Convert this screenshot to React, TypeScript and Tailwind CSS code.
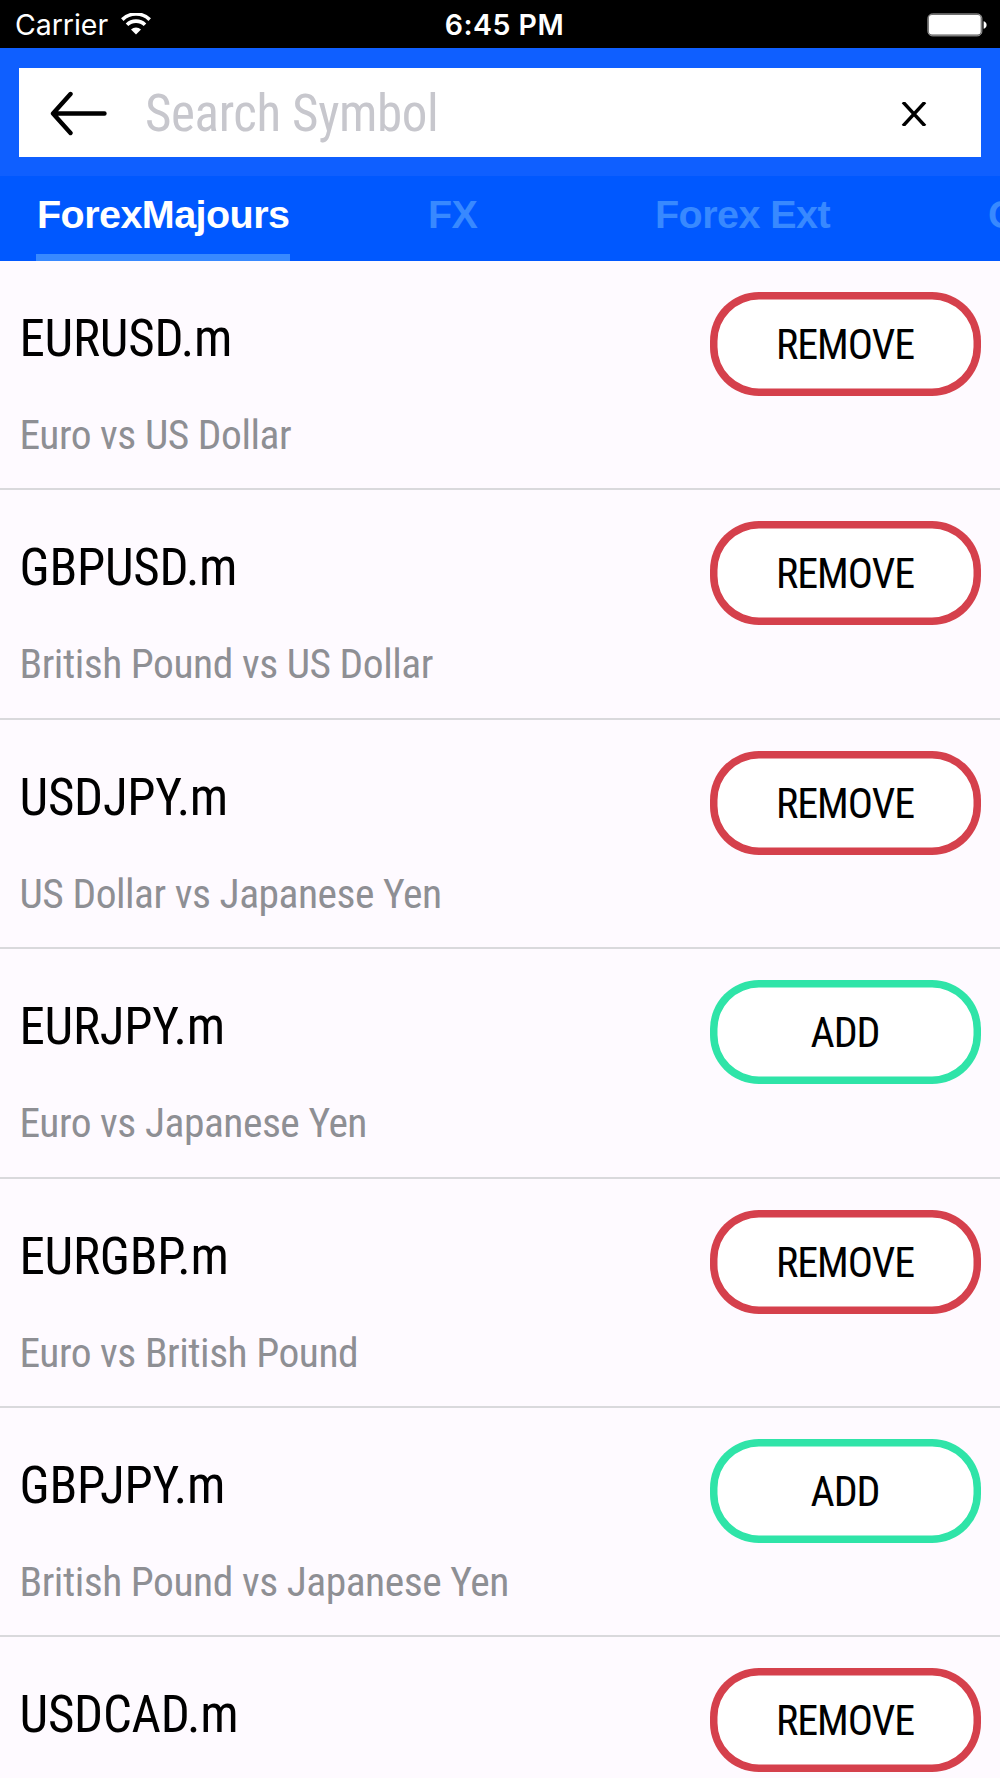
const symbols = [
  { name: 'EURUSD.m', desc: 'Euro vs US Dollar', added: true },
  { name: 'GBPUSD.m', desc: 'British Pound vs US Dollar', added: true },
  { name: 'USDJPY.m', desc: 'US Dollar vs Japanese Yen', added: true },
  { name: 'EURJPY.m', desc: 'Euro vs Japanese Yen', added: false },
  { name: 'EURGBP.m', desc: 'Euro vs British Pound', added: true },
  { name: 'GBPJPY.m', desc: 'British Pound vs Japanese Yen', added: false },
  { name: 'USDCAD.m', desc: '', added: true },
];

function StatusBar() {
  return (
    <div className="grid h-12 grid-cols-3 items-center bg-black pt-0.5 pr-[13px] pl-[15px] font-['Inter',sans-serif] text-white">
      <div className="flex items-center gap-[13px]">
        <span className="text-[28.5px] leading-[34px] tracking-[-0.05px]">Carrier</span>
        <svg className="mb-0.5 h-[22px] w-[30px]" viewBox="0 0 30 22" fill="none">
          <path d="M1.3 6.6a19.6 19.6 0 0 1 27.4 0" stroke="currentColor" strokeWidth="3.6" />
          <path d="M6 11.8a12.8 12.8 0 0 1 18 0" stroke="currentColor" strokeWidth="3.6" />
          <path d="M10 16.4a7.2 7.2 0 0 1 10 0L15 21.6z" fill="currentColor" />
        </svg>
      </div>
      <span className="pl-[7px] text-center text-[28.5px] leading-[34px] font-[560] tracking-[0.5px]">6:45 PM</span>
      <svg className="h-6 w-[60px] justify-self-end" viewBox="0 0 60 24">
        <rect x="0.9" y="0.9" width="54" height="22" rx="4.5" fill="#555" stroke="#999" strokeWidth="1" />
        <rect x="1.9" y="1.9" width="51.8" height="19.6" rx="3" fill="#fff" />
        <path d="M56.6 8.2c4 1 4 6.6 0 7.6z" fill="#fff" />
      </svg>
    </div>
  );
}

function SearchBar() {
  return (
    <div className="h-32 bg-[#0f5fff] px-[19px] pt-[19.5px]">
      <div className="flex h-[89.5px] items-center bg-white pr-[54px] pl-[31px]">
        <svg className="mt-[3px] h-[45px] w-[58px]" viewBox="0 0 58 45" fill="none" stroke="#000" strokeWidth="4.4" strokeLinecap="round" strokeLinejoin="round">
          <path d="M54.5 22.5H4M20.5 3L3 22.5L20.5 42" />
        </svg>
        <span className="mt-[3px] ml-[37px] flex-1 text-[51px] leading-[60px] font-[450] tracking-[-0.38px] text-[#c7c7cd] font-stretch-75%">Search Symbol</span>
        <svg className="mt-1 h-6 w-[26px]" viewBox="0 0 26 24" stroke="#000" strokeWidth="3.4">
          <path d="M2 0L24 24M24 0L2 24" />
        </svg>
      </div>
    </div>
  );
}

function Tabs() {
  return (
    <div className="flex h-[85px] overflow-hidden bg-[#0058ff] pl-9 font-['Liberation_Sans',sans-serif] text-[39.5px] leading-[46px] font-bold tracking-[-0.55px] whitespace-nowrap text-[#3889ff]">
      <div className="w-[254px] shrink-0 border-b-[7px] border-[#3889ff] pt-[15px] pl-px text-white">ForexMajours</div>
      <div className="ml-[138px] w-[52px] shrink-0 pt-[15px]">FX</div>
      <div className="ml-[175px] w-[178px] shrink-0 pt-[15px]">Forex Ext</div>
      <div className="ml-[155px] shrink-0 pt-[15px]">C</div>
    </div>
  );
}

function SymbolRow({ name, desc, added }: { name: string; desc: string; added: boolean }) {
  return (
    <div className="flex h-[229.4px] shrink-0 justify-between border-b-2 border-[#d9d9dc] px-[19px] whitespace-nowrap font-stretch-75%">
      <div className="pl-[0.5px]">
        <div className="mt-[48px] text-[51px] leading-[60px] font-[450] tracking-[-0.25px]">{name}</div>
        <div className="mt-[42px] text-[41.5px] leading-[48px] font-[450] tracking-[-0.47px] text-[#8e8f94]">{desc}</div>
      </div>
      <button
        className={`mt-[31px] h-[104px] w-[271px] rounded-[49px] bg-white pt-0.5 pr-px text-[42px] leading-[48px] font-[430] tracking-[-1px] ${added ? 'shadow-[inset_0_0_0_7.5px_#d5404c]' : 'shadow-[inset_0_0_0_7.5px_#2fe4a8]'}`}
      >
        {added ? 'REMOVE' : 'ADD'}
      </button>
    </div>
  );
}

export default function App() {
  return (
    <div className="flex h-[1778px] w-[1000px] flex-col overflow-hidden bg-[#fefaff] font-['Roboto',sans-serif] text-black">
      <StatusBar />
      <SearchBar />
      <Tabs />
      <div className="flex min-h-0 flex-1 flex-col overflow-hidden">
        {symbols.map((s) => (
          <SymbolRow key={s.name} {...s} />
        ))}
      </div>
    </div>
  );
}
